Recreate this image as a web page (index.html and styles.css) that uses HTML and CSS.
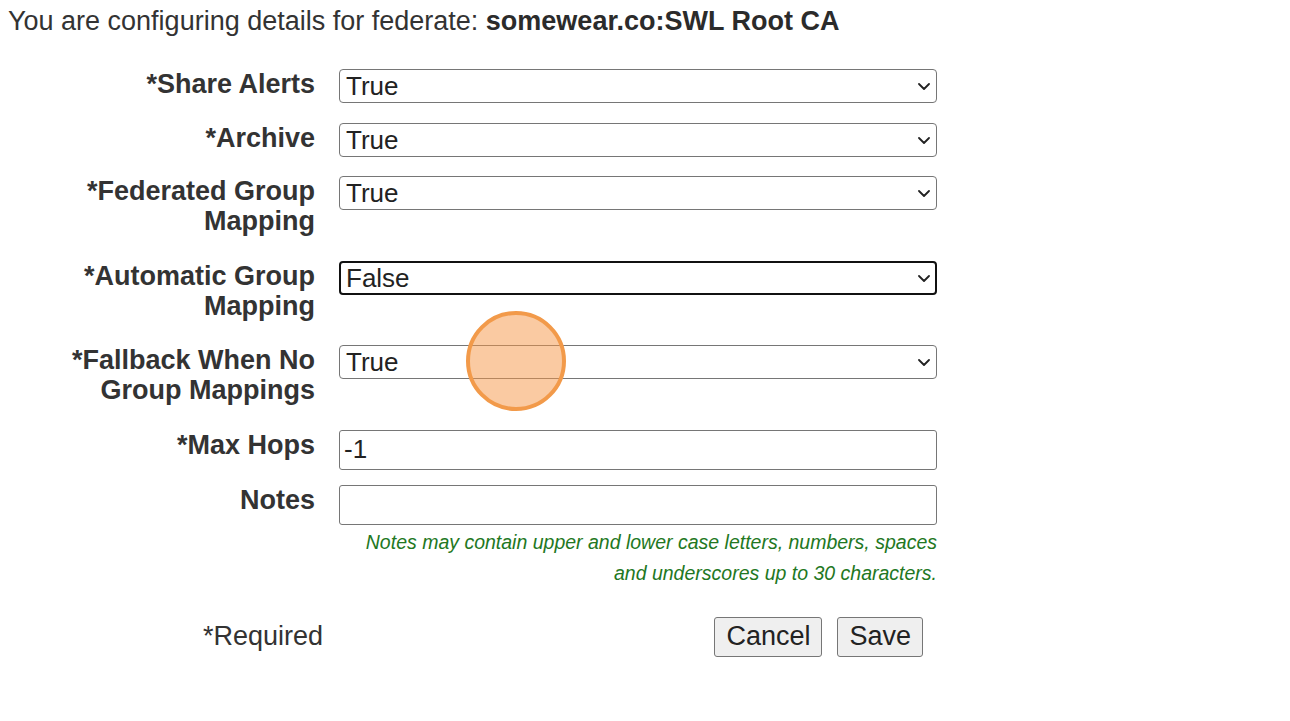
FILE: index.html
```html
<!DOCTYPE html>
<html lang="en">
<head>
<meta charset="utf-8">
<title>Federate details</title>
<link rel="stylesheet" href="styles.css">
</head>
<body>
<p class="intro">You are configuring details for federate: <b>somewear.co:SWL Root CA</b></p>

<form class="form">
  <div class="row">
    <label class="label">*Share Alerts</label>
    <div class="field"><div class="select-wrap"><select class="select"><option>True</option><option>False</option></select><svg class="chev" viewBox="0 0 12 7"><path d="M1 1 L6 6 L11 1"/></svg></div></div>
  </div>
  <div class="row">
    <label class="label">*Archive</label>
    <div class="field"><div class="select-wrap"><select class="select"><option>True</option><option>False</option></select><svg class="chev" viewBox="0 0 12 7"><path d="M1 1 L6 6 L11 1"/></svg></div></div>
  </div>
  <div class="row row--wrap">
    <label class="label">*Federated Group<br>Mapping</label>
    <div class="field"><div class="select-wrap"><select class="select"><option>True</option><option>False</option></select><svg class="chev" viewBox="0 0 12 7"><path d="M1 1 L6 6 L11 1"/></svg></div></div>
  </div>
  <div class="row row--wrap">
    <label class="label">*Automatic Group<br>Mapping</label>
    <div class="field"><div class="select-wrap"><select class="select focused"><option>False</option><option>True</option></select><svg class="chev" viewBox="0 0 12 7"><path d="M1 1 L6 6 L11 1"/></svg></div></div>
  </div>
  <div class="row row--wrap">
    <label class="label">*Fallback When No<br>Group Mappings</label>
    <div class="field"><div class="select-wrap"><select class="select"><option>True</option><option>False</option></select><svg class="chev" viewBox="0 0 12 7"><path d="M1 1 L6 6 L11 1"/></svg></div></div>
  </div>
  <div class="row row--input">
    <label class="label">*Max Hops</label>
    <div class="field"><input class="input" type="text" value="-1"></div>
  </div>
  <div class="row row--input">
    <label class="label">Notes</label>
    <div class="field">
      <input class="input" type="text" value="">
      <p class="hint">Notes may contain upper and lower case letters, numbers, spaces<br>and underscores up to 30 characters.</p>
    </div>
  </div>
  <div class="footer">
    <span class="required">*Required</span>
    <div class="actions">
      <button type="button" class="btn">Cancel</button>
      <button type="button" class="btn">Save</button>
    </div>
  </div>
</form>

<div class="cursor-dot"></div>
</body>
</html>
```

FILE: styles.css
```css
html, body {
  background: #ffffff;
}
body {
  margin: 6px 8px 0 8px;
  font-family: "Liberation Sans", Arial, sans-serif;
  color: #333333;
}
.intro {
  margin: 0;
  font-size: 27px;
  line-height: 31px;
  color: #333333;
}
.intro b {
  font-weight: bold;
  color: #2b2b2b;
}
.form {
  margin-top: 32px;
}
.row {
  display: grid;
  grid-template-columns: 307px 598px;
  column-gap: 24px;
  align-items: start;
}
.label {
  display: block;
  text-align: right;
  font-size: 27px;
  font-weight: bold;
  line-height: 30px;
  padding-bottom: 23.5px;
  color: #333333;
}
.row--wrap .label {
  padding-bottom: 24.5px;
}
.row--input .label {
  padding-bottom: 25px;
}
.field {
  display: flex;
  flex-direction: column;
}
.select-wrap {
  position: relative;
  width: 598px;
  height: 34px;
}
.select {
  -webkit-appearance: none;
  appearance: none;
  box-sizing: border-box;
  width: 598px;
  height: 34px;
  margin: 0;
  padding: 0 30px 0 6px;
  border: 1px solid #767676;
  border-radius: 4px;
  background: #ffffff;
  font-family: "Liberation Sans", Arial, sans-serif;
  font-size: 26px;
  color: #222222;
  outline: none;
}
.select.focused {
  border: 2px solid #111111;
  padding-left: 5px;
}
.chev {
  position: absolute;
  right: 7px;
  top: 14px;
  width: 12px;
  height: 7px;
  pointer-events: none;
}
.chev path {
  fill: none;
  stroke: #222222;
  stroke-width: 1.8;
  stroke-linecap: round;
  stroke-linejoin: round;
}
.input {
  box-sizing: border-box;
  width: 598px;
  height: 40px;
  margin: 0;
  padding: 0 4px;
  border: 1px solid #767676;
  border-radius: 3px;
  background: #ffffff;
  font-family: "Liberation Sans", Arial, sans-serif;
  font-size: 26px;
  color: #222222;
  outline: none;
}
.hint {
  margin: 0;
  padding-top: 2px;
  text-align: right;
  font-style: italic;
  font-size: 19.5px;
  line-height: 31px;
  color: #227722;
}
.footer {
  display: flex;
  align-items: center;
  width: 915px;
  margin-top: 28px;
}
.required {
  margin-left: 195px;
  font-size: 27px;
  line-height: 31px;
  color: #333333;
}
.actions {
  margin-left: auto;
  display: flex;
  gap: 15px;
}
.btn {
  box-sizing: border-box;
  height: 40px;
  padding: 0 11px;
  border: 1px solid #767676;
  border-radius: 3px;
  background: #efefef;
  font-family: "Liberation Sans", Arial, sans-serif;
  font-size: 27px;
  color: #222222;
}
.cursor-dot {
  position: absolute;
  left: 466px;
  top: 311px;
  width: 100px;
  height: 100px;
  box-sizing: border-box;
  border: 4px solid #f29a4a;
  border-radius: 50%;
  background: rgba(246, 150, 70, 0.5);
}
```
